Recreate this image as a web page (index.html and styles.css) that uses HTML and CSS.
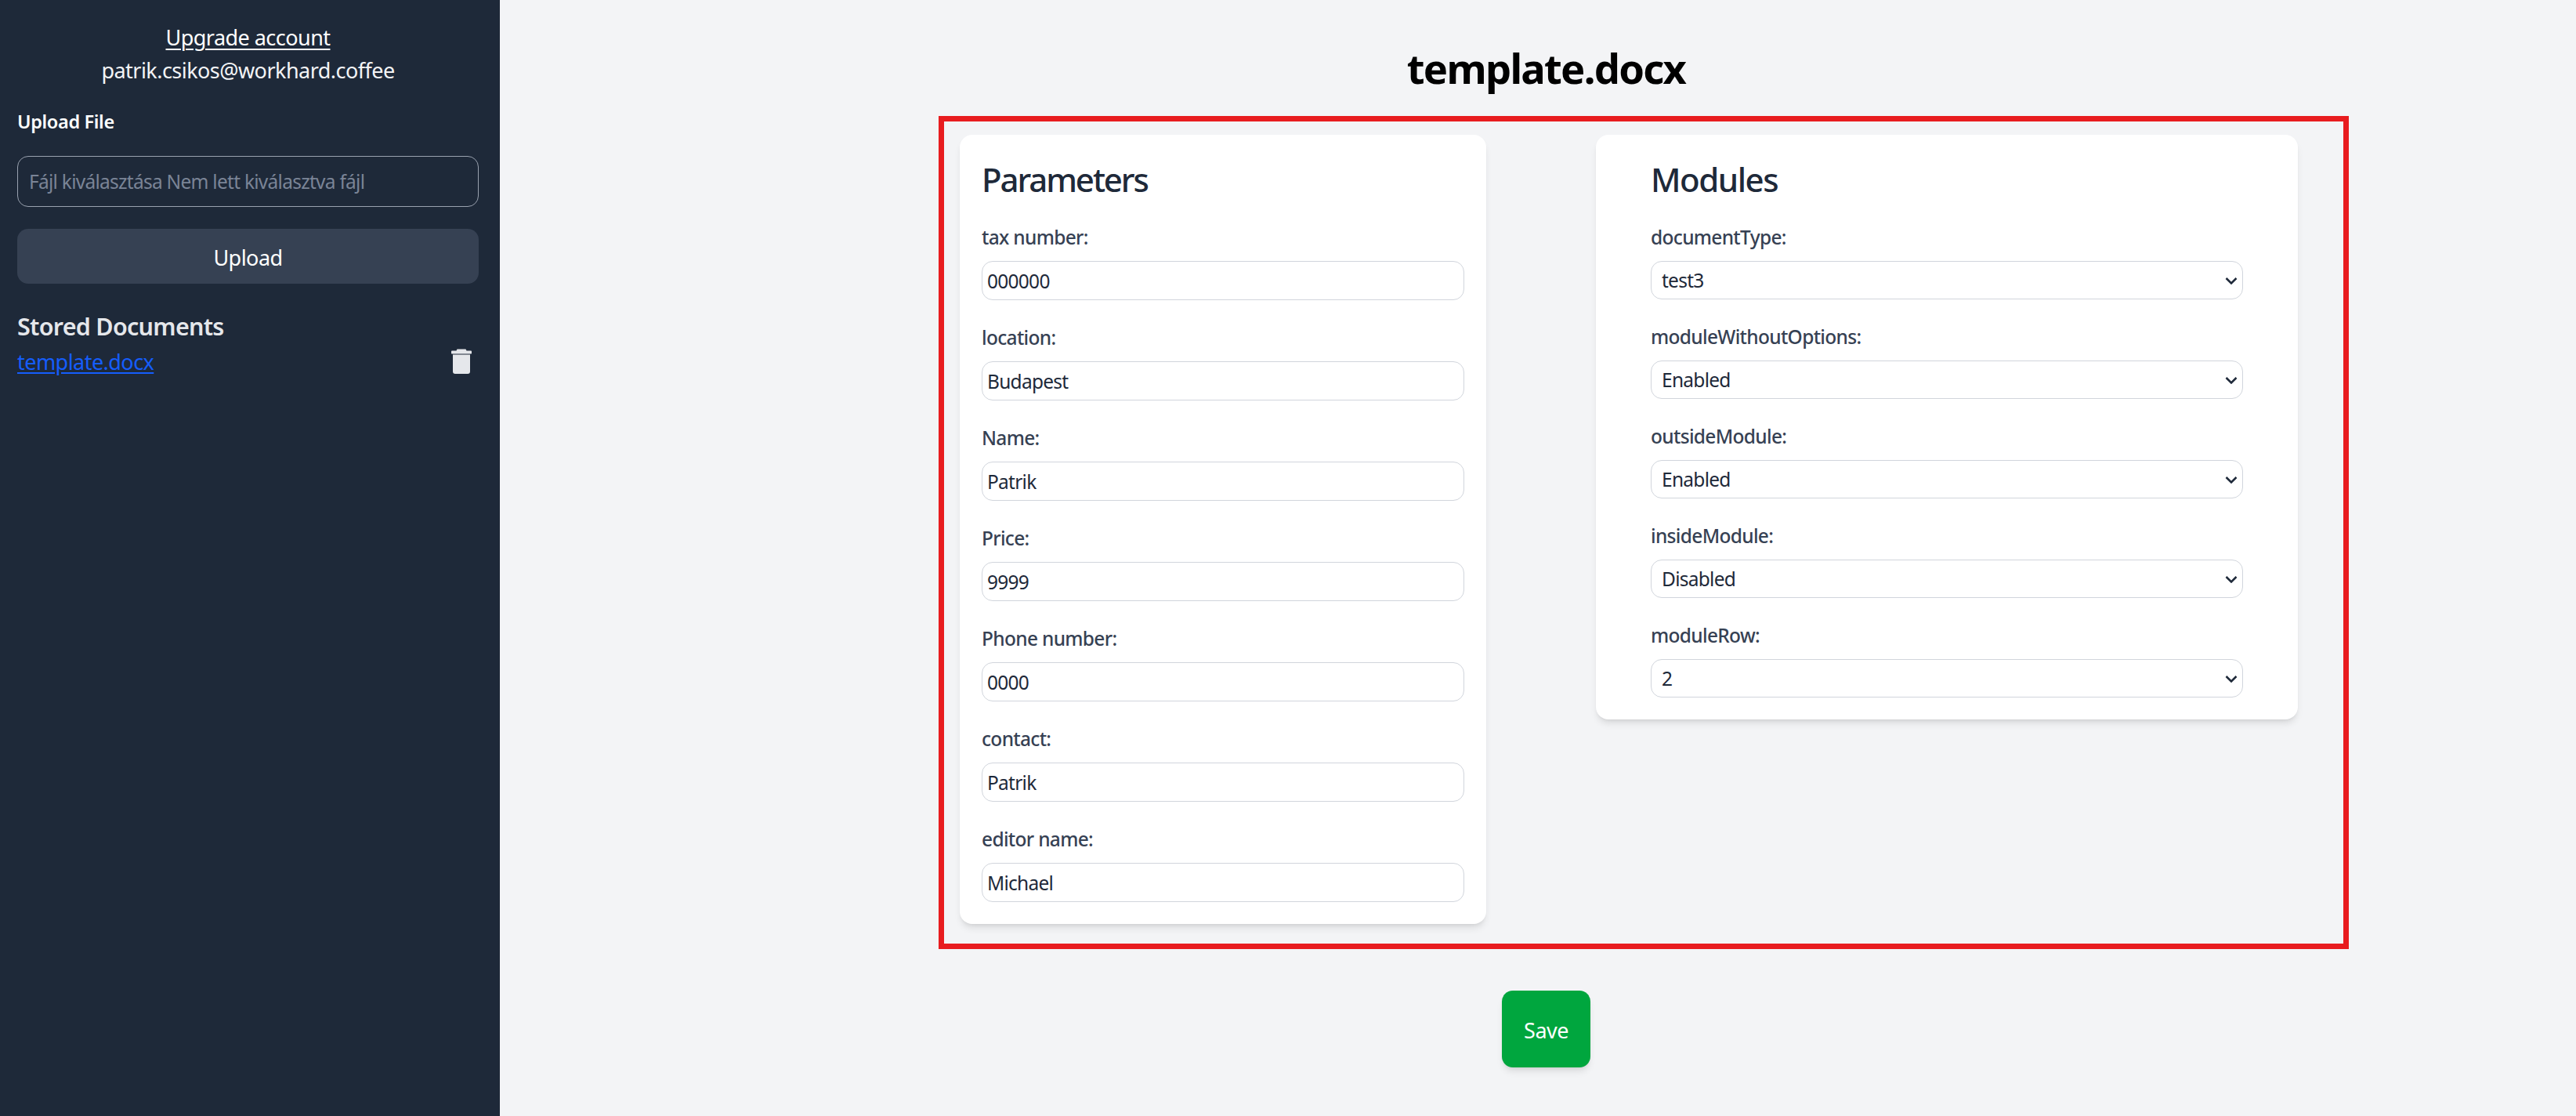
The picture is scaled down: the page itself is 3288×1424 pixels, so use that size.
FILE: index.html
```html
<!DOCTYPE html>
<html lang="en">
<head>
<meta charset="utf-8">
<title>template.docx</title>
<link rel="stylesheet" href="styles.css">
</head>
<body>
<div class="app">
  <aside class="sidebar">
    <div class="account">
      <a class="upgrade" href="#">Upgrade account</a>
      <div class="email">patrik.csikos@workhard.coffee</div>
    </div>
    <div class="upload-label">Upload File</div>
    <div class="file-input">Fájl kiválasztása Nem lett kiválasztva fájl</div>
    <button class="upload-btn" type="button">Upload</button>
    <h2 class="stored-title">Stored Documents</h2>
    <div class="doc-row">
      <a class="doc-link" href="#">template.docx</a>
      <svg class="trash" viewBox="0 0 26 32" aria-hidden="true"><path d="M7.5 0.4h11l1 2H25a1 1 0 0 1 1 1v2.4a.6.6 0 0 1-.6.6H.6a.6.6 0 0 1-.6-.6V3.4a1 1 0 0 1 1-1h5.500z"/><path d="M2 7.400h22V29a3 3 0 0 1-3 3H5a3 3 0 0 1-3-3z"/></svg>
    </div>
  </aside>
  <main class="main">
    <h1 class="title">template.docx</h1>
    <div class="frame">
      <section class="card card-params">
        <h2 class="card-title">Parameters</h2>
        <div class="field"><label class="field-label">tax number:</label><input class="text-input" value="000000"></div>
        <div class="field"><label class="field-label">location:</label><input class="text-input" value="Budapest"></div>
        <div class="field"><label class="field-label">Name:</label><input class="text-input" value="Patrik"></div>
        <div class="field"><label class="field-label">Price:</label><input class="text-input" value="9999"></div>
        <div class="field"><label class="field-label">Phone number:</label><input class="text-input" value="0000"></div>
        <div class="field"><label class="field-label">contact:</label><input class="text-input" value="Patrik"></div>
        <div class="field"><label class="field-label">editor name:</label><input class="text-input" value="Michael"></div>
      </section>
      <section class="card card-modules">
        <h2 class="card-title">Modules</h2>
        <div class="field"><label class="field-label">documentType:</label>
          <div class="select-wrap"><select class="select"><option>test3</option></select><svg class="chev" viewBox="0 0 16 9"><path d="M1.500 1 8 7.500 14.500 1"/></svg></div></div>
        <div class="field"><label class="field-label">moduleWithoutOptions:</label>
          <div class="select-wrap"><select class="select"><option>Enabled</option></select><svg class="chev" viewBox="0 0 16 9"><path d="M1.500 1 8 7.500 14.500 1"/></svg></div></div>
        <div class="field"><label class="field-label">outsideModule:</label>
          <div class="select-wrap"><select class="select"><option>Enabled</option></select><svg class="chev" viewBox="0 0 16 9"><path d="M1.500 1 8 7.500 14.500 1"/></svg></div></div>
        <div class="field"><label class="field-label">insideModule:</label>
          <div class="select-wrap"><select class="select"><option>Disabled</option></select><svg class="chev" viewBox="0 0 16 9"><path d="M1.500 1 8 7.500 14.500 1"/></svg></div></div>
        <div class="field"><label class="field-label">moduleRow:</label>
          <div class="select-wrap"><select class="select"><option>2</option></select><svg class="chev" viewBox="0 0 16 9"><path d="M1.500 1 8 7.500 14.500 1"/></svg></div></div>
      </section>
    </div>
    <div class="actions"><button class="save-btn" type="button">Save</button></div>
  </main>
</div>
</body>
</html>
```
FILE: styles.css
```css
* { box-sizing: border-box; }
html, body { margin: 0; height: 100%; overflow: hidden; }
body {
  font-family: "Noto Sans", "Open Sans", "Liberation Sans", sans-serif;
  background: #f3f4f6;
  color: #1e2939;
}
.app { display: flex; height: 1424px; }

.sidebar {
  width: 638px;
  flex: none;
  background: #1e2939;
  color: #fff;
  padding: 27px 27px 0 22px;
  display: flex;
  flex-direction: column;
}
.account { text-align: center; font-size: 27px; line-height: 42px; letter-spacing: -0.02em; color: #f3f4f6; }
.upgrade { color: #fff; text-decoration: underline; text-underline-offset: 4px; text-decoration-thickness: 2px; }
.upload-label { margin-top: 27px; font-size: 23.500px; line-height: 35px; font-weight: 600; letter-spacing: -0.015em; }
.file-input {
  margin-top: 26px;
  height: 65px;
  border: 1.500px solid #99a1af;
  border-radius: 14px;
  padding: 0 14px;
  font-size: 24.500px;
  line-height: 63px;
  letter-spacing: -0.03em;
  color: #7a8496;
}
.upload-btn {
  margin-top: 28px;
  height: 70px;
  border: 0;
  border-radius: 14px;
  padding: 2px 0 0;
  background: #364153;
  color: #fff;
  font: inherit;
  font-size: 27px;
  letter-spacing: -0.02em;
}
.stored-title { margin: 30px 0 0; font-size: 30.500px; line-height: 48px; font-weight: 600; letter-spacing: -0.024em; color: #e5e7eb; }
.doc-row { display: flex; justify-content: space-between; align-items: center; height: 42px; padding-right: 9px; }
.doc-link { color: #155dfc; font-size: 27px; letter-spacing: -0.02em; text-underline-offset: 3px; }
.trash { width: 26px; height: 32px; fill: #e5e7eb; }

.main { flex: 1; min-width: 0; padding-left: 21px; display: flex; flex-direction: column; }
.title {
  margin: 52px 0 0;
  text-align: center;
  font-size: 52.500px;
  line-height: 70px;
  font-weight: 700;
  letter-spacing: -0.033em;
  color: #000;
}
.frame {
  margin: 26px 0 0 539px;
  width: 1800px;
  height: 1063px;
  border: 7px solid #e81c1f;
  padding: 17px 58px 0 20px;
  display: grid;
  grid-template-columns: 672px 896px;
  justify-content: space-between;
  align-items: start;
}
.card {
  background: #fff;
  border-radius: 16px;
  padding: 28px;
  box-shadow: 0 7px 10px -2px rgba(0,0,0,.1), 0 3px 5px -3px rgba(0,0,0,.1);
  display: flex;
  flex-direction: column;
}
.card-modules { padding-left: 70px; padding-right: 70px; }
.card-title { margin: 1px 0 28px; font-size: 42px; line-height: 56px; font-weight: 500; letter-spacing: -0.035em; color: #1e2939; }
.card-params .card-title { letter-spacing: -0.05em; }
.field + .field { margin-top: 30px; }
.field { display: flex; flex-direction: column; }
.field-label { font-size: 24.500px; line-height: 35px; margin-bottom: 13px; color: #364153; font-weight: 500; letter-spacing: -0.028em; }
.text-input {
  height: 50px;
  width: 100%;
  border: 1.500px solid #d1d5dc;
  border-radius: 14px;
  padding: 0 6px;
  background: #fff;
  font: inherit;
  font-size: 24.500px;
  letter-spacing: -0.03em;
  color: #1e2939;
}
.select-wrap { position: relative; }
.select {
  display: block;
  appearance: none;
  height: 49px;
  width: 100%;
  border: 1.500px solid #d1d5dc;
  border-radius: 14px;
  padding: 0 13px;
  background: #fff;
  font: inherit;
  font-size: 24.500px;
  letter-spacing: -0.03em;
  color: #1e2939;
}
.chev {
  position: absolute;
  right: 7px;
  top: 21px;
  width: 16px;
  height: 9px;
  fill: none;
  stroke: #1e2939;
  stroke-width: 2.500;
  pointer-events: none;
}
.actions { display: flex; justify-content: center; margin-top: 53px; }
.save-btn {
  width: 113px;
  height: 98px;
  border: 0;
  border-radius: 14px;
  padding: 2px 0 0;
  background: #00a63e;
  color: #fff;
  font: inherit;
  font-size: 27px;
  letter-spacing: -0.02em;
  box-shadow: 0 7px 10px -2px rgba(0,0,0,.1), 0 3px 5px -3px rgba(0,0,0,.1);
}
```
